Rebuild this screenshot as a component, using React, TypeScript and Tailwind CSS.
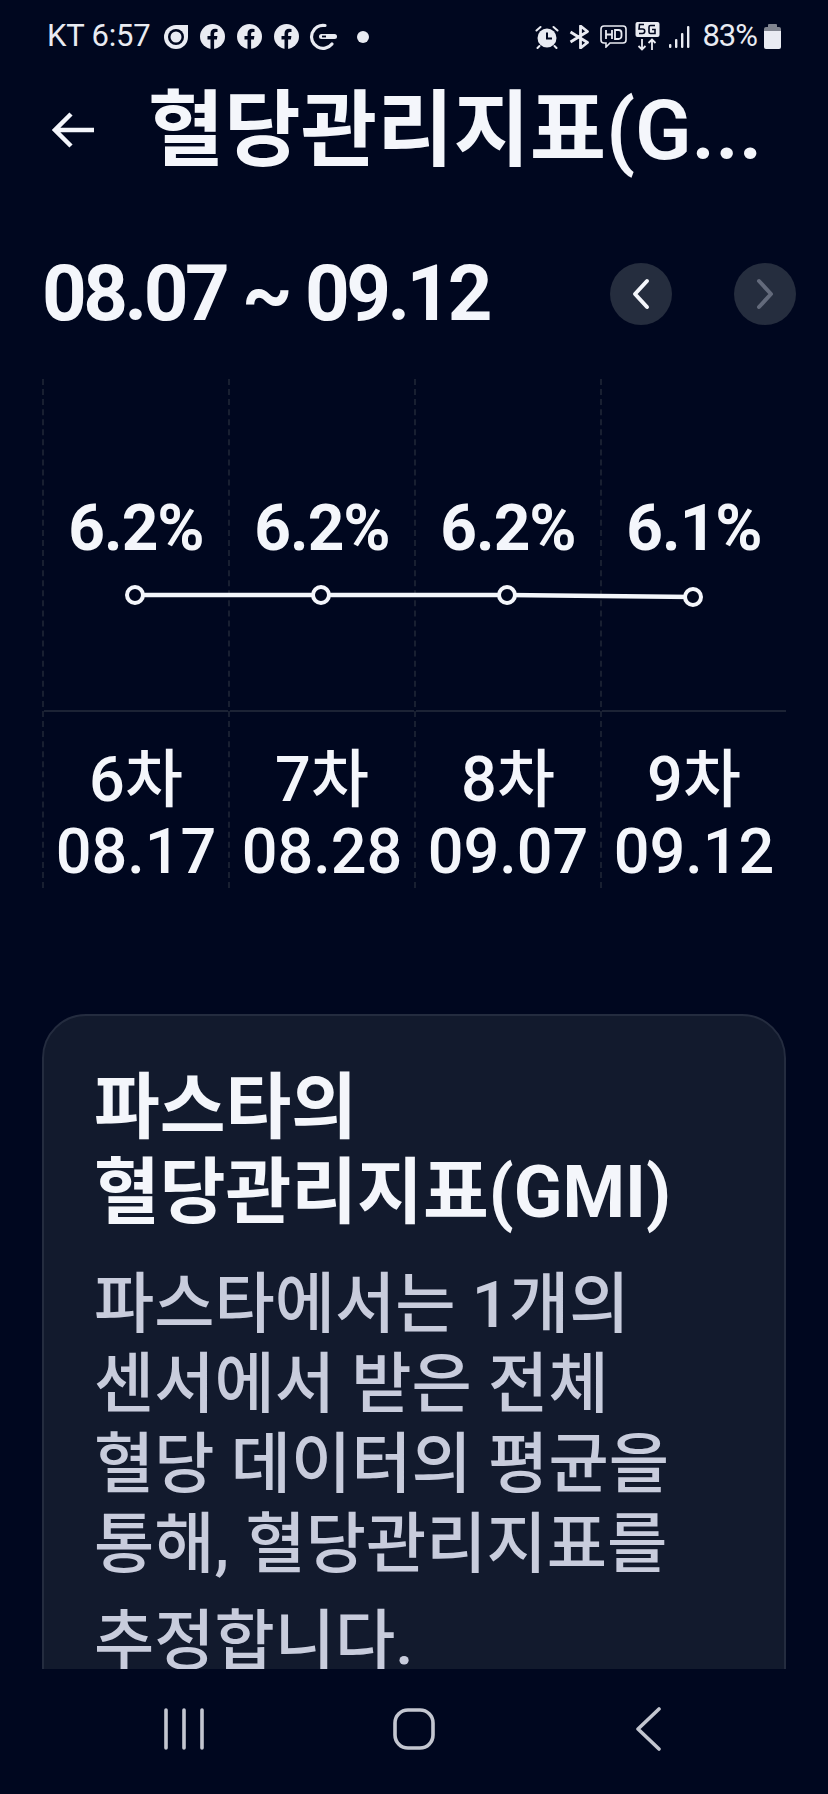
const font = "font-['Roboto','Noto_Sans_CJK_KR',sans-serif]";

const columns = [
  { value: "6.2%", round: "6차", date: "08.17" },
  { value: "6.2%", round: "7차", date: "08.28" },
  { value: "6.2%", round: "8차", date: "09.07" },
  { value: "6.1%", round: "9차", date: "09.12" },
];

const FacebookIcon = () => (
  <svg width="25" height="25" viewBox="0 0 25 25" className="shrink-0">
    <circle cx="12.5" cy="12.5" r="12.5" fill="#e9ebf2" />
    <path d="M10.5 25v-9.5H7.5v-3.6h3V9.6c0-3.1 1.8-4.8 4.6-4.8l2.4.2v3h-1.5c-1.5 0-1.9.9-1.9 1.9v2h3.3l-.5 3.6h-2.8V25z" fill="#00071f" />
  </svg>
);

const StatusBar = () => (
  <div className="flex h-[72px] shrink-0 items-center justify-between pl-[47px] pr-[47px] pt-[1px] text-[31px] text-[#e9ebf2]">
    <div className="flex items-center">
      <span className="tracking-[-0.2px]">KT 6:57</span>
      <svg width="26" height="26" viewBox="0 0 26 26" className="ml-[13px] shrink-0">
        <path d="M13 1h12v12a12 12 0 1 1-12-12z" fill="#e9ebf2" />
        <circle cx="13" cy="13" r="8" fill="#00071f" />
        <circle cx="13" cy="13" r="5.5" fill="#e9ebf2" />
      </svg>
      <div className="ml-[11px] flex gap-[12px]">
        <FacebookIcon />
        <FacebookIcon />
        <FacebookIcon />
      </div>
      <svg width="32" height="28" viewBox="0 0 32 28" className="ml-[8px] shrink-0">
        <path d="M18 2.5A11.5 11.5 0 1 0 25 21" fill="none" stroke="#e9ebf2" strokeWidth="3.2" strokeLinecap="round" />
        <rect x="12" y="11" width="18" height="5" rx="2.5" fill="#e9ebf2" />
        <rect x="15" y="12.6" width="4" height="1.8" fill="#00071f" />
      </svg>
      <div className="ml-[18px] size-[12px] rounded-full bg-[#e9ebf2]" />
    </div>
    <div className="flex items-center">
      <svg width="24" height="24" viewBox="0 0 24 24" className="shrink-0">
        <circle cx="12" cy="13" r="9.5" fill="#e9ebf2" />
        <path d="M12 7.5V13.5H17" fill="none" stroke="#00071f" strokeWidth="2" />
        <path d="M1.5 5.5 5.5 2M22.5 5.5 18.5 2M4.5 21l-2 2M19.5 21l2 2" stroke="#e9ebf2" strokeWidth="2" strokeLinecap="round" />
      </svg>
      <svg width="22" height="24" viewBox="0 0 22 24" className="ml-[10px] shrink-0">
        <path d="M1.5 7l17 10.5-7 5.5V1l7 5.5L1.5 17" fill="none" stroke="#e9ebf2" strokeWidth="2.8" strokeLinejoin="round" />
      </svg>
      <svg width="27" height="23" viewBox="0 0 27 23" className="ml-[9px] shrink-0">
        <path d="M4 1h19a3 3 0 0 1 3 3v11a3 3 0 0 1-3 3H10l-4 4v-4H4a3 3 0 0 1-3-3V4a3 3 0 0 1 3-3z" fill="none" stroke="#e9ebf2" strokeWidth="1.6" />
        <path d="M6 5v9M12 5v9M6 9.5h6M15 5v9h3.5a3 3 0 0 0 3-3V8a3 3 0 0 0-3-3z" fill="none" stroke="#e9ebf2" strokeWidth="1.8" />
      </svg>
      <svg width="25" height="29" viewBox="0 0 25 29" className="ml-[8px] shrink-0">
        <rect x="0.5" y="0" width="24" height="15" rx="2" fill="#e9ebf2" />
        <path d="M9 2.5H4.5L4 7h3.5a1.8 1.8 0 0 1 0 4.5H4M20 3.5h-4.5a1.5 1.5 0 0 0-1.5 1.5v5a1.5 1.5 0 0 0 1.5 1.5H20V7.5h-3" fill="none" stroke="#00071f" strokeWidth="1.6" />
        <path d="M7 17v10M3.5 24l3.5 3.5 3.5-3.5M17 28V18M13.5 21l3.5-3.5 3.5 3.5" fill="none" stroke="#e9ebf2" strokeWidth="1.8" />
      </svg>
      <svg width="21" height="24" viewBox="0 0 21 24" className="ml-[9px] shrink-0">
        <rect x="0" y="19" width="2.4" height="4" rx="1" fill="#e9ebf2" />
        <rect x="6" y="14" width="2.4" height="9" rx="1" fill="#e9ebf2" />
        <rect x="12" y="8" width="2.4" height="15" rx="1" fill="#e9ebf2" />
        <rect x="18" y="1" width="2.4" height="22" rx="1" fill="#e9ebf2" />
      </svg>
      <span className="ml-[12px] tracking-[-1px]">83%</span>
      <svg width="17" height="25" viewBox="0 0 17 25" className="ml-[7px] shrink-0">
        <path d="M5 0h7a1 1 0 0 1 1 1v2h2a2 2 0 0 1 2 2v2H0V5a2 2 0 0 1 2-2h2V1a1 1 0 0 1 1-1z" fill="#80848f" />
        <path d="M0 7h17v16a2 2 0 0 1-2 2H2a2 2 0 0 1-2-2z" fill="#e9ebf2" />
      </svg>
    </div>
  </div>
);

export default function App() {
  return (
    <div className={`flex h-[1794px] w-[828px] flex-col overflow-hidden bg-[#00071f] ${font}`}>
      <StatusBar />

      <header className="flex h-[116px] shrink-0 items-center pl-[52px] text-[#f4f6fb]">
        <svg width="44" height="38" viewBox="0 0 44 38" className="shrink-0">
          <path d="M42 19H3M19 3 3 19l16 16" fill="none" stroke="currentColor" strokeWidth="4.5" />
        </svg>
        <h1 className="ml-[52px] whitespace-nowrap text-[83px] font-semibold leading-none">혈당관리지표(G...</h1>
      </header>

      <main className="flex min-h-0 flex-1 flex-col overflow-hidden px-[42px]">
        <div className="mt-[65px] flex h-[82px] shrink-0 items-center justify-between">
          <div className="text-[78px] font-bold leading-none tracking-[-3.5px] text-[#f4f6fb]">08.07 ~ 09.12</div>
          <div className="mr-[-10px] flex gap-[62px]">
            <div className="flex size-[62px] items-center justify-center rounded-full bg-[#252d3e] text-[#f4f6fb]">
              <svg width="22" height="32" viewBox="0 0 22 32">
                <path d="M17 3 5 16l12 13" fill="none" stroke="currentColor" strokeWidth="4" strokeLinecap="round" strokeLinejoin="round" />
              </svg>
            </div>
            <div className="flex size-[62px] items-center justify-center rounded-full bg-[#252d3e] text-[#636a7b]">
              <svg width="22" height="32" viewBox="0 0 22 32">
                <path d="M5 3l12 13L5 29" fill="none" stroke="currentColor" strokeWidth="4" strokeLinecap="round" strokeLinejoin="round" />
              </svg>
            </div>
          </div>
        </div>

        <div className="relative mt-[44px] grid h-[505px] w-[744px] shrink-0 grid-cols-4">
          {columns.map((c) => (
            <div key={c.date} className="flex flex-col border-l-2 border-dashed border-[#181f31] text-center text-[#f4f6fb]">
              <div className="h-[333px] border-b-2 border-solid border-[#1c2335] pt-[115px] text-[64px] font-bold leading-[70px] tracking-[-1px]">
                {c.value}
              </div>
              <div className="pt-[32px] text-[63px] font-medium leading-[72px]">
                <div>{c.round}</div>
                <div>{c.date}</div>
              </div>
            </div>
          ))}
          <svg width="744" height="60" viewBox="0 0 744 60" className="absolute left-0 top-[189px]">
            <path d="M93 27H279L465 27 651 29" fill="none" stroke="#f4f6fb" strokeWidth="4.5" />
            {[[93, 27], [279, 27], [465, 27], [651, 29]].map(([x, y]) => (
              <circle key={x} cx={x} cy={y} r="8" fill="#00071f" stroke="#f4f6fb" strokeWidth="4" />
            ))}
          </svg>
        </div>

        <section className="mt-[130px] w-[744px] shrink-0 rounded-t-[44px] border-2 border-[#242c3f] bg-[#121a2d] px-[50px] pt-[49px]">
          <h2 className="text-[71.5px] font-bold leading-[85px] text-[#f4f6fb]">
            파스타의
            <br />
            혈당관리지표(GMI)
          </h2>
          <p className="mt-[30px] text-[65.5px] font-medium leading-[80px] text-[#c8ccdc]">
            파스타에서는 1개의
            <br />
            센서에서 받은 전체
            <br />
            혈당 데이터의 평균을
            <br />
            통해, 혈당관리지표를
          </p>
          <p className="mt-[17px] text-[65.5px] font-medium leading-[80px] text-[#c8ccdc]">추정합니다.</p>
        </section>
      </main>

      <nav className="flex h-[125px] shrink-0 items-start bg-[#00071f]">
        <div className="flex items-center pl-[164px] pt-[38px] text-[#c3c6d0]">
          <svg width="40" height="42" viewBox="0 0 40 42">
            <path d="M2 2v38M20 2v38M38 2v38" fill="none" stroke="currentColor" strokeWidth="3.6" strokeLinecap="round" />
          </svg>
          <svg width="42" height="42" viewBox="0 0 42 42" className="ml-[189px]">
            <rect x="2" y="2" width="38" height="38" rx="13" fill="none" stroke="currentColor" strokeWidth="3.6" />
          </svg>
          <svg width="26" height="44" viewBox="0 0 26 44" className="ml-[200px]">
            <path d="M24 2 3 22l21 20" fill="none" stroke="currentColor" strokeWidth="3.6" strokeLinecap="round" strokeLinejoin="round" />
          </svg>
        </div>
      </nav>
    </div>
  );
}
